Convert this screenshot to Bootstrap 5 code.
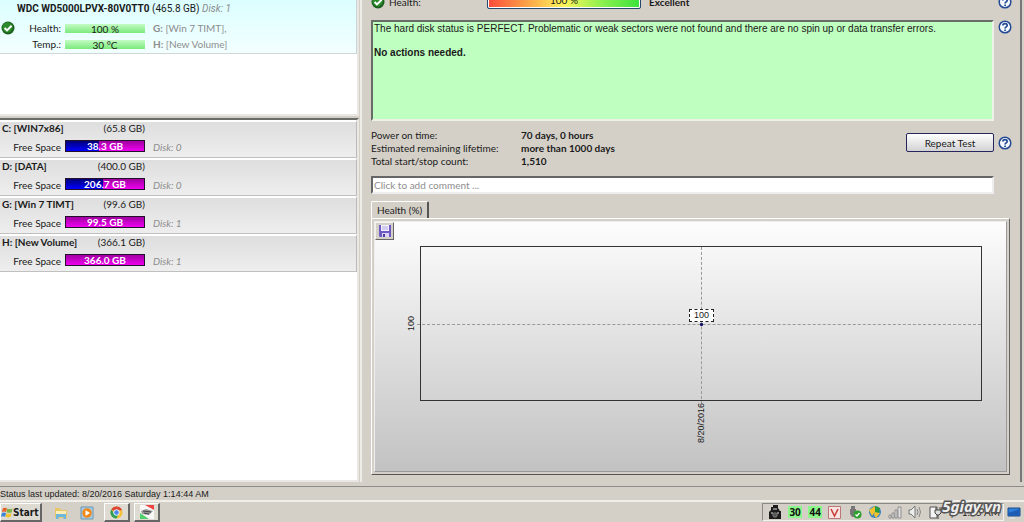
<!DOCTYPE html>
<html lang="en">
<head>
<meta charset="utf-8">
<meta name="viewport" content="width=device-width, initial-scale=1">
<title>Hard disk status</title>
<link href="https://cdn.jsdelivr.net/npm/bootstrap@5.3.0/dist/css/bootstrap.min.css" rel="stylesheet">
<style>
:root{--face:#d4d0c8;--ink:#1a1a1a}
body{font-family:Lato,"Noto Sans",sans-serif;font-size:10px;line-height:13px;color:var(--ink);background:var(--face)}
button,input{font:inherit;color:inherit}
.tall{min-height:0}
/* left column */
.side{width:362px;border-right:2px solid #efede8}
.pane{background:#fff;border-right:2px solid #e9e8e5;border-bottom:2px solid #e9e8e5;margin-right:1px}
.pane-disks{height:116px}
.pane-parts{margin-top:2px;border-top:2px solid #6b6b68}
.disk{height:54px;padding:2px 0 0 1px;background:linear-gradient(#dcfeff,#f3ffff);border-right:1px solid #c9d6d6;border-bottom:1px solid #cfd6d6}
.disk-name{font-family:Roboto,sans-serif;padding-left:16px}
.soft{color:#8d8d8d}
.disk-grid{display:grid;grid-template-columns:16px 40px 80px 1fr;column-gap:4px;row-gap:3px;padding-top:6px;align-items:center}
.meter{height:9px;line-height:10px;text-align:center;background:linear-gradient(#c4fbc4,#7bea7b)}
.part{height:38px;padding:0 0 0 2px;background:linear-gradient(#dedede,#eee);border-top:2px solid #fff;border-right:1px solid #bbb;border-bottom:1px solid #c0c0c0}
.part-head{width:143px}
.part-row{padding-top:5px;line-height:14px}
.free-label{width:59px}
.space{width:80px;height:12px;line-height:11px;border:1px solid #24102c;color:#fff;font-weight:700;text-align:center;background:linear-gradient(#a000a0,#f000f0)}
/* right column */
.detail{border-right:2px solid #777;margin-right:2px;padding-left:9px}
.fields{margin-right:8px}
.top-row{height:20px;overflow:hidden}
.top-line{height:9px;overflow:hidden}
.score{width:154px;height:16px;border:1px solid #26476e;border-radius:2px;background:linear-gradient(90deg,#fc4a3a,#fca048 25%,#fdf65a 50%,#8cf050 75%,#3ce23c);box-shadow:inset 0 0 0 1px #fff;text-align:center}
.status-box{height:101px;border:2px solid;border-color:#686d66 #edf2e8 #edf2e8 #686d66;background:#bfffbf;font-family:"Liberation Sans",sans-serif;line-height:12px;padding:1px 0 0 1px}
.help{width:14px;height:14px;padding:0;border:0;background:none;display:block}
.rail{width:14px}
.facts{line-height:13px}
.facts dt{width:150px}
.repeat{width:88px;height:19px;border:1px solid #26265c;border-radius:2px;background:linear-gradient(#fff,#d2d2d4);padding:0;line-height:16px}
.note{height:18px;border:2px solid;border-color:#666 #eee #eee #666;background:#fff;padding:0 1px;width:100%;display:block;outline:0}
.note::placeholder{color:#8d8d8d;opacity:1}
.chart-area{padding-top:7px;margin-right:10px}
.tab-btn{height:17px;width:58px;border:0;border-left:1px solid #fff;border-top:1px solid #fff;border-right:2px solid #555;border-radius:2px 2px 0 0;background:var(--face);padding:0;display:block}
.sheet{border:1px solid;border-color:#fff #666 #555 #fff;padding:2px}
.graph{border:1px solid;border-color:#eee #999 #999 #eee;background:linear-gradient(#fdfdfd,#c2c2c2);position:relative;padding:24px 24px 0 31px}
.save{position:absolute;left:0;top:0;width:19px;height:18px;border:1px solid;border-color:#f4f2ee #666 #666 #f4f2ee;background:var(--face);padding:1px 2px;line-height:0}
.axis{font-family:"Liberation Sans",sans-serif;font-size:9px;line-height:11px;writing-mode:vertical-rl;transform:rotate(180deg)}
.y-axis{width:11px}
.plot{position:relative;border:1px solid #333;height:155px;margin-left:3px}
.plot .h{position:absolute;left:-4px;right:0;top:50%;border-top:1px dashed #999}
.plot .v{position:absolute;top:0;bottom:-4px;left:50%;border-left:1px dashed #999}
.plot .dot{position:absolute;left:50%;top:50%;width:3px;height:3px;margin:-1px;background:#10106a;border-radius:1px}
.plot .tip{position:absolute;left:50%;top:50%;width:25px;height:13px;margin:-15px 0 0 -12px;border:1px dashed #222;background:#fff;font:9px/11px "Liberation Sans",sans-serif;text-align:center}
.x-axis{height:70px;padding:2px 0 0 14px}
/* bottom bars */
.statusline{height:14px;border-top:1px solid #8e8c88;font-family:"Liberation Sans",sans-serif;font-size:9px;line-height:14px}
.taskbar{height:22px;border-top:2px solid #f1efea;padding-top:1px}
.raised{border:1px solid;border-color:#fff #666 #666 #fff;background:#dedbd3;border-bottom-width:2px;border-right-width:2px}
.start{width:42px;height:19px;font-family:"DejaVu Sans Condensed","DejaVu Sans",sans-serif;font-weight:700;font-size:10px;padding:0}
.launch{padding-left:6px}
.task{width:26px;height:19px;padding:0;line-height:0;display:flex;align-items:center;justify-content:center}
.flat{border:0;background:none}
.tray{width:242px;height:18px;border:1px solid;border-color:#8a8a86 #f4f2ee #f4f2ee #8a8a86;padding:0 3px 0 5px}
.tray-icons{width:174px}
.temp{width:14px;height:12px;line-height:12px;background:#8cf58c;font-family:"Noto Sans",sans-serif;font-weight:700;text-align:center;color:#111}
.brand{position:absolute;right:23px;bottom:6px;font:italic 700 15px/20px "Noto Sans",sans-serif;color:#eee;-webkit-text-stroke:3px #555;paint-order:stroke fill}
</style>
<script src="https://cdn.jsdelivr.net/npm/bootstrap@5.3.0/dist/js/bootstrap.bundle.min.js"></script>
</head>
<body>
<svg class="d-none">
 <symbol id="ok" viewBox="0 0 14 14"><circle cx="7" cy="7" r="6.5" fill="#1c5e1c"/><circle cx="6.6" cy="6.4" r="5.2" fill="#2c8a2c"/><path d="M3.6 7l2.4 2.4 4.6-4.6" fill="none" stroke="#fff" stroke-width="2"/></symbol>
 <symbol id="q" viewBox="0 0 14 14"><circle cx="7" cy="7" r="5.8" fill="#f4f8ff" stroke="#234a93" stroke-width="1.5"/><path d="M4.9 5.6C4.9 2.9 9.2 3 9.2 5.4 9.2 6.9 7.1 6.8 7.1 8.5M7.1 9.5v1.6" fill="none" stroke="#234a93" stroke-width="1.7"/></symbol>
</svg>
<div class="vh-100 d-flex flex-column overflow-hidden position-relative">
 <main class="d-flex flex-grow-1 tall pb-1">
  <section class="side d-flex flex-column flex-shrink-0">
   <div class="pane pane-disks">
    <article class="disk">
     <div class="disk-name"><strong>WDC WD5000LPVX-80V0TT0</strong> (465.8 GB) <em class="soft">Disk: 1</em></div>
     <div class="disk-grid">
      <svg width="14" height="14"><use href="#ok"/></svg><span class="text-end">Health:</span><span class="meter">100 %</span><span class="soft ps-1"><b>G:</b> [Win 7 TIMT],</span>
      <span></span><span class="text-end">Temp.:</span><span class="meter">30 °C</span><span class="soft ps-1"><b>H:</b> [New Volume]</span>
     </div>
    </article>
   </div>
   <div class="pane pane-parts flex-grow-1">
    <article class="part"><div class="part-head d-flex justify-content-between"><b>C: [WIN7x86]</b><span>(65.8 GB)</span></div><div class="part-row d-flex"><span class="free-label text-end">Free Space</span><span class="space ms-1" style="background:linear-gradient(#000078,#0000ff) 0/42% no-repeat,linear-gradient(#a000a0,#f000f0)">38.3 GB</span><em class="soft ms-2">Disk: 0</em></div></article>
    <article class="part"><div class="part-head d-flex justify-content-between"><b>D: [DATA]</b><span>(400.0 GB)</span></div><div class="part-row d-flex"><span class="free-label text-end">Free Space</span><span class="space ms-1" style="background:linear-gradient(#000078,#0000ff) 0/48% no-repeat,linear-gradient(#a000a0,#f000f0)">206.7 GB</span><em class="soft ms-2">Disk: 0</em></div></article>
    <article class="part"><div class="part-head d-flex justify-content-between"><b>G: [Win 7 TIMT]</b><span>(99.6 GB)</span></div><div class="part-row d-flex"><span class="free-label text-end">Free Space</span><span class="space ms-1">99.5 GB</span><em class="soft ms-2">Disk: 1</em></div></article>
    <article class="part"><div class="part-head d-flex justify-content-between"><b>H: [New Volume]</b><span>(366.1 GB)</span></div><div class="part-row d-flex"><span class="free-label text-end">Free Space</span><span class="space ms-1">366.0 GB</span><em class="soft ms-2">Disk: 1</em></div></article>
   </div>
  </section>
  <section class="detail flex-grow-1">
   <div class="fields">
    <div class="top-row"><div class="top-line d-flex align-items-end">
     <svg width="14" height="14"><use href="#ok"/></svg><span class="ms-1 flex-shrink-0" style="width:98px">Health:</span><div class="score">100 %</div><strong class="ms-2">Excellent</strong><button class="help ms-auto" aria-label="Help"><svg width="14" height="14"><use href="#q"/></svg></button>
    </div></div>
    <div class="d-flex">
     <div class="status-box flex-grow-1"><div>The hard disk status is PERFECT. Problematic or weak sectors were not found and there are no spin up or data transfer errors.</div><b class="d-block mt-2 pt-1">No actions needed.</b></div>
     <div class="rail ms-1"><button class="help" aria-label="Help"><svg width="14" height="14"><use href="#q"/></svg></button></div>
    </div>
    <div class="d-flex pt-2 pb-2">
     <dl class="facts m-0 flex-grow-1">
      <div class="d-flex"><dt class="fw-normal">Power on time:</dt><dd class="m-0 fw-bold">70 days, 0 hours</dd></div>
      <div class="d-flex"><dt class="fw-normal">Estimated remaining lifetime:</dt><dd class="m-0 fw-bold">more than 1000 days</dd></div>
      <div class="d-flex"><dt class="fw-normal">Total start/stop count:</dt><dd class="m-0 fw-bold">1,510</dd></div>
     </dl>
     <div class="d-flex align-items-center align-self-start pt-1 pb-1"><button class="repeat">Repeat Test</button>
     <button class="help ms-1" aria-label="Help"><svg class="d-block" width="14" height="14"><use href="#q"/></svg></button></div>
    </div>
    <div class="d-flex"><input class="note" aria-label="Comment" placeholder="Click to add comment ..."><div class="rail ms-1 flex-shrink-0"></div></div>
   </div>
   <div class="chart-area">
    <button class="tab-btn">Health (%)</button>
    <div class="sheet"><div class="graph">
     <button class="save" aria-label="Save"><svg width="14" height="14" viewBox="0 0 14 14"><path d="M1 1h12v12H2l-1-1z" fill="#6d5ac4"/><path d="M3 1h8v6H3z" fill="#f3f0ff"/><path d="M4 3h6M4 5h6" stroke="#b5a9e6"/><path d="M4 9h7v4H4z" fill="#d9d3f4"/><path d="M5 10h2v3H5z" fill="#4c3a9c"/></svg></button>
     <div class="d-flex"><div class="y-axis axis text-center">100</div><div class="plot flex-grow-1"><i class="h"></i><i class="v"></i><span class="tip">100</span><i class="dot"></i></div></div>
     <div class="x-axis d-flex justify-content-center align-items-start"><span class="axis">8/20/2016</span></div>
    </div></div>
   </div>
  </section>
 </main>
 <div class="statusline">Status last updated: 8/20/2016 Saturday 1:14:44 AM</div>
 <footer class="taskbar d-flex align-items-start">
  <button class="raised start d-flex align-items-center"><svg class="flex-shrink-0" width="12" height="13" viewBox="0 0 13 13"><path d="M2 2q2-1.500 4.500 0L5.500 6Q3 5 1 6z" fill="#e5622c"/><path d="M7 2.300q3 1.500 5.500 0l-1 4Q9 7.500 6 6.200z" fill="#7cb342"/><path d="M1 7q2-1 4.500 0l-1 4Q2 10 0 11z" fill="#3c86d8"/><path d="M6 7.200q3 1.500 5.500 0l-1 4Q8 12.500 5 11.200z" fill="#f2c230"/></svg>Start</button>
  <div class="launch d-flex">
  <button class="task flat" aria-label="Explorer"><svg width="14" height="14" viewBox="0 0 14 14"><path d="M1 2h5l1 2h6v8H1z" fill="#e9c766"/><path d="M2 5h10v3H2z" fill="#fbeeb8"/><path d="M2 8h10v5h-2.500v-2h-5v2H2z" fill="#6db7dc"/></svg></button>
  <button class="task flat me-1" aria-label="Media player"><svg width="14" height="14" viewBox="0 0 14 14"><path d="M1 1h12v12H1z" fill="#a9cbe4" stroke="#6896b8"/><circle cx="7" cy="7" r="4.800" fill="#f08a1c"/><path d="M5.500 4.200L10 7l-4.500 2.800z" fill="#fff"/></svg></button>
  <button class="task raised me-1" aria-label="Chrome"><svg width="13" height="13" viewBox="0 0 14 14"><circle cx="7" cy="7" r="6.500" fill="#f5c33b"/><path d="M7 7L1.400 3.700A6.500 6.500 0 0 1 13 4.500H7z" fill="#db4437"/><path d="M1.400 3.700A6.500 6.500 0 0 0 7 13.500L9 8.500H5z" fill="#2f9e58"/><circle cx="7" cy="7" r="3" fill="#4a86e8" stroke="#fff"/></svg></button>
  <button class="task raised" aria-label="Disk monitor"><svg width="14" height="14" viewBox="0 0 14 14"><path d="M0 0h14v14H0z" fill="#f8f8f8"/><path d="M5 0h9v5z" fill="#ef4444"/><path d="M0 8v6h9z" fill="#4fd06a"/><path d="M1 6l5-2 7 2-4 4-7-1z" fill="#999"/><path d="M3 6l8 1M4 8l5 1" stroke="#444"/></svg></button>
  </div>
  <div class="tray ms-auto d-flex align-items-center justify-content-between">
   <div class="tray-icons d-flex align-items-center justify-content-between">
   <svg width="14" height="14" viewBox="0 0 14 14"><path d="M5 0h5v3l2 3h1v8H1V7l2-2V2h2z" fill="#1c1c1c"/><path d="M5 4h4M3 8h2M9 8h2" stroke="#ddd"/><circle cx="7" cy="10" r="2.300" fill="#555" stroke="#999" stroke-width=".600"/></svg>
   <span class="temp">30</span><span class="temp">44</span>
   <svg width="13" height="13" viewBox="0 0 13 13"><path d="M.5.5h12v12H.5z" fill="#f9e4e2" stroke="#b77"/><path d="M3 3l3.500 7L10 3" fill="none" stroke="#c8403a" stroke-width="1.600"/></svg>
   <svg width="14" height="14" viewBox="0 0 14 14"><path d="M3 1h4v3h1v5l-2 3H4L2 9V4h1z" fill="#777"/><circle cx="9.500" cy="9.500" r="4" fill="#2ca02c"/><path d="M7.500 9.500L9 11l2.500-3" fill="none" stroke="#fff" stroke-width="1.300"/></svg>
   <svg width="14" height="14" viewBox="0 0 14 14"><circle cx="7" cy="7" r="6" fill="#3b82c4"/><path d="M1 5l6-4v6l-3 4z" fill="#f2c32e"/><path d="M7 6l5 2-4 5-2-3z" fill="#f2c32e"/><path d="M7 1l5 2-1 5-4-1z" fill="#2a9a3e"/></svg>
   <svg width="14" height="14" viewBox="0 0 14 14"><path d="M1 10h2v3H1zM4 8h2v5H4zM7 5h2v8H7zM10 2h3v11h-3z" fill="#ddd" stroke="#777" stroke-width=".700"/></svg>
   <svg width="14" height="14" viewBox="0 0 14 14"><path d="M1 5h2l4-4v12L3 9H1z" fill="#eee" stroke="#777"/><path d="M9 4q2 3 0 6M11 2q3 5 0 10" fill="none" stroke="#888"/></svg>
   <svg width="14" height="14" viewBox="0 0 14 14"><path d="M2 2h7v11H2z" fill="#f4f4f4" stroke="#555"/><path d="M7 5h6v3l-2 2H9L7 8zM8 2v3M12 2v3M10 10v4" fill="#ddd" stroke="#444"/></svg>
   </div>
   <span>|</span><span>1:15 AM</span>
  </div>
  <button class="task flat" style="width:20px" aria-label="Show desktop"><svg width="14" height="12" viewBox="0 0 14 12"><path d="M1 1h12v8H1z" fill="#2f7fdc" stroke="#1d4a86"/><path d="M1 6l12-4v7H1z" fill="#1f5cb4"/><path d="M3 11h5" stroke="#ddd" stroke-width="2"/></svg></button>
 </footer>
 <div class="brand">5giay.vn</div>
</div>
</body>
</html>
